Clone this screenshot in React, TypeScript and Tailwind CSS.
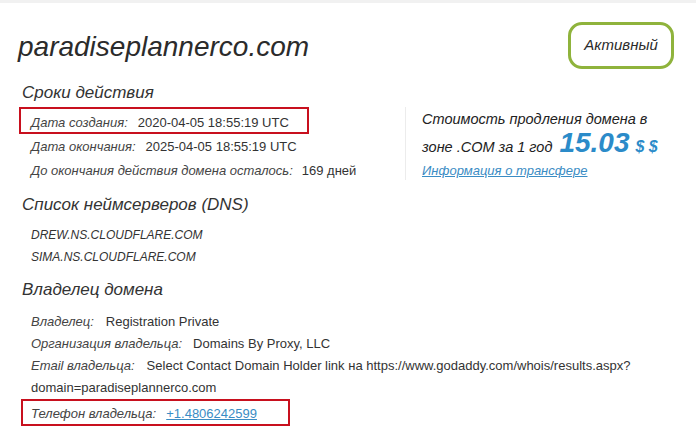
export default function App() {
  const font = "font-['Liberation_Sans',Arial,sans-serif]"

  return (
    <div className={`w-[696px] h-[432px] overflow-hidden bg-white text-[#333] ${font}`}>
      <div className="h-[3px] bg-[#f1f1f1]" />

      {/* Header */}
      <div className="flex items-start justify-between pl-[18px] pr-[22px] pt-[19px]">
        <h1 className="mt-[8px] text-[28px] leading-[34px] italic text-[#2b2b2b]">paradiseplannerco.com</h1>
        <div className="flex h-[47px] w-[106px] items-center justify-center rounded-[14px] border-[3px] border-[#8fb33c] text-[15px] italic text-[#2b2b2b]">
          Активный
        </div>
      </div>

      <div className="pl-[18px]">
        {/* Сроки действия */}
        <h2 className="mt-[13px] pl-[4px] text-[17px] leading-[22px] italic text-[#333]">Сроки действия</h2>

        <div className="mt-[3px] flex">
          <div className="w-[387px]">
            <div className="ml-[1px] w-[290px] border-2 border-[#c8101e] pl-[10px] pt-[4px] text-[13px] leading-[19px]">
              <span className="italic text-[#444]">Дата создания:</span>
              <span className="ml-[10px]">2020-04-05 18:55:19 UTC</span>
            </div>
            <div className="mt-[1px] pl-[13px] text-[13px] leading-[24px]">
              <div>
                <span className="italic text-[#444]">Дата окончания:</span>
                <span className="ml-[10px]">2025-04-05 18:55:19 UTC</span>
              </div>
              <div>
                <span className="italic text-[#444]">До окончания действия домена осталось:</span>
                <span className="ml-[9px]">169 дней</span>
              </div>
            </div>
          </div>

          {/* Renewal price */}
          <div className="h-[73px] border-l border-[#ececec] pl-[16px]">
            <div className="mt-[1px] text-[14.5px] leading-[22px] italic text-[#222]">Стоимость продления домена в</div>
            <div className="flex h-[28px] items-baseline text-[14.5px] italic text-[#222]">
              <span className="leading-[26px]">зоне .COM за 1 год</span>
              <span className="ml-[7px] text-[28px] leading-[26px] font-bold text-[#2b8bc9]">15.03</span>
              <span className="ml-[6px] text-[16px] font-bold text-[#2b8bc9]">$ $</span>
            </div>
            <a href="#" className="text-[13px] leading-[20px] italic text-[#3a8cc4] underline">
              Информация о трансфере
            </a>
          </div>
        </div>

        {/* DNS */}
        <h2 className="mt-[11px] pl-[4px] text-[17px] leading-[22px] italic text-[#333]">Список неймсерверов (DNS)</h2>
        <div className="mt-[8px] pl-[13px] text-[12px] leading-[22px] italic text-[#333]">
          <div>DREW.NS.CLOUDFLARE.COM</div>
          <div>SIMA.NS.CLOUDFLARE.COM</div>
        </div>

        {/* Владелец */}
        <h2 className="mt-[11px] pl-[4px] text-[17px] leading-[22px] italic text-[#333]">Владелец домена</h2>
        <div className="mt-[10px] pl-[13px] pr-[40px] text-[13px] leading-[22px]">
          <div>
            <span className="italic text-[#444]">Владелец:</span>
            <span className="ml-[12px]">Registration Private</span>
          </div>
          <div>
            <span className="italic text-[#444]">Организация владельца:</span>
            <span className="ml-[11px]">Domains By Proxy, LLC</span>
          </div>
          <div>
            <span className="italic text-[#444]">Email владельца:</span>
            <span className="ml-[12px]">Select Contact Domain Holder link на https://www.godaddy.com/whois/results.aspx?</span>
            <br />
            <span>domain=paradiseplannerco.com</span>
          </div>
        </div>
        <div className="ml-[3px] w-[269px] border-2 border-[#c8101e] pl-[8px] pt-[3px] pb-[1px] text-[13px] leading-[19px]">
          <span className="italic text-[#444]">Телефон владельца:</span>
          <a href="#" className="ml-[10px] text-[#3a8cc4] underline">+1.4806242599</a>
        </div>
      </div>
    </div>
  )
}
